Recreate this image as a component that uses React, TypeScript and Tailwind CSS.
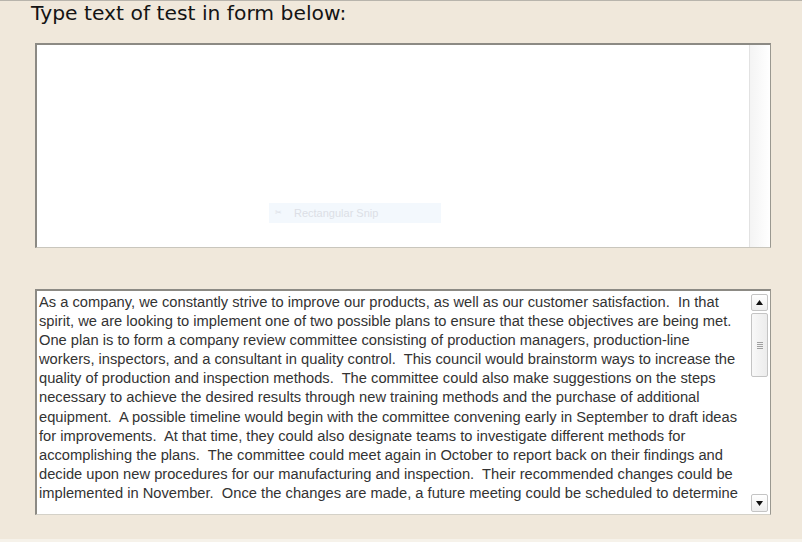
import React from "react";

const lines = [
  "As a company, we constantly strive to improve our products, as well as our customer satisfaction.  In that",
  "spirit, we are looking to implement one of two possible plans to ensure that these objectives are being met.",
  "One plan is to form a company review committee consisting of production managers, production-line",
  "workers, inspectors, and a consultant in quality control.  This council would brainstorm ways to increase the",
  "quality of production and inspection methods.  The committee could also make suggestions on the steps",
  "necessary to achieve the desired results through new training methods and the purchase of additional",
  "equipment.  A possible timeline would begin with the committee convening early in September to draft ideas",
  "for improvements.  At that time, they could also designate teams to investigate different methods for",
  "accomplishing the plans.  The committee could meet again in October to report back on their findings and",
  "decide upon new procedures for our manufacturing and inspection.  Their recommended changes could be",
  "implemented in November.  Once the changes are made, a future meeting could be scheduled to determine",
];

export default function App() {
  return (
    <div className="w-[802px] h-[542px] bg-[#f0e8db] border-t border-[#b8b4ac] overflow-hidden flex flex-col">
      <div
        className="pl-[31px] pt-[1px] h-[42px] text-[20.3px] leading-[23px] text-[#141414]"
        style={{ fontFamily: '"DejaVu Sans", Verdana, sans-serif' }}
      >
        Type text of test in form below:
      </div>
      <div className="ml-[35px] w-[736px] h-[205px] border-t-2 border-l-2 border-[#8c8a84] border-r border-r-[#9a9890] border-b border-b-[#c9c6bd] bg-white flex">
        <div className="flex-1 flex items-end justify-start pb-[24px] pl-[232px]">
          <div
            className="w-[172px] h-[20px] bg-[#f3f8fd] flex items-center gap-[12px] pl-[6px] text-[11px] text-[#dcdfe6]"
            style={{ fontFamily: '"Liberation Sans", Arial, sans-serif' }}
          >
            <span className="text-[8px]">✂</span>
            <span>Rectangular Snip</span>
          </div>
        </div>
        <div className="w-[21px] border-l border-[#e2e2e2] bg-gradient-to-r from-[#f4f4f4] to-[#ffffff]" />
      </div>
      <div className="h-[41px]" />
      <div className="ml-[35px] w-[736px] h-[226px] border-t-2 border-l-2 border-[#8c8a84] border-r border-r-[#9a9890] border-b border-b-[#d4d1c8] bg-white flex">
        <div
          className="flex-1 pl-[2px] pt-[2px] text-[14.7px] leading-[19.1px] text-[#333333] whitespace-pre overflow-hidden"
          style={{ fontFamily: '"Liberation Sans", Arial, sans-serif' }}
        >
          {lines.map((l, i) => (
            <div key={i}>{l}</div>
          ))}
        </div>
        <div className="w-[20px] flex flex-col pt-[3px] pb-[2px] pr-[1px]">
          <div className="h-[17px] mx-[1px] border border-[#c4c4c4] rounded-[2px] bg-gradient-to-b from-white to-[#eeeeee] flex items-center justify-center">
            <svg width="7" height="5" viewBox="0 0 7 5">
              <path d="M3.5 0 L7 5 L0 5 Z" fill="#111" />
            </svg>
          </div>
          <div className="h-[64px] mt-[2px] mx-[1px] border border-[#c4c4c4] rounded-[2px] bg-gradient-to-r from-[#f8f8f8] to-[#ececec] flex items-center justify-center">
            <div className="flex flex-col gap-[1px]">
              <div className="w-[6px] h-[1px] bg-[#a0a0a0]" />
              <div className="w-[6px] h-[1px] bg-[#a0a0a0]" />
              <div className="w-[6px] h-[1px] bg-[#a0a0a0]" />
              <div className="w-[6px] h-[1px] bg-[#a0a0a0]" />
            </div>
          </div>
          <div className="flex-1" />
          <div className="h-[18px] mx-[1px] border border-[#c4c4c4] rounded-[2px] bg-gradient-to-b from-white to-[#eeeeee] flex items-center justify-center">
            <svg width="7" height="5" viewBox="0 0 7 5">
              <path d="M0 0 L7 0 L3.5 5 Z" fill="#111" />
            </svg>
          </div>
        </div>
      </div>
      <div className="flex-1" />
      <div className="h-[3px] bg-[#f6f2ea]" />
    </div>
  );
}
